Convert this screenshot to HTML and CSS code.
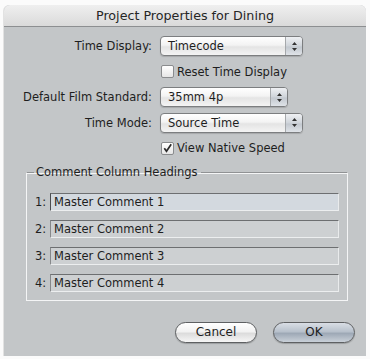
FILE: index.html
```html
<!DOCTYPE html>
<html>
<head>
<meta charset="utf-8">
<link rel="stylesheet" href="styles.css">
</head>
<body>
<div class="window">
  <div class="titlebar">Project Properties for Dining</div>
  <div class="content">
    <div class="form">
      <div class="label">Time Display:</div>
      <div class="popup w143"><span class="ptext">Timecode</span><span class="arrows"><svg width="7" height="11" viewBox="0 0 7 11"><path d="M3.5 1 L6 4 L1 4 Z M3.5 10 L6 7 L1 7 Z" fill="#333"/></svg></span></div>

      <div></div>
      <div class="check"><span class="box"></span><span>Reset Time Display</span></div>

      <div class="label">Default Film Standard:</div>
      <div class="popup w128"><span class="ptext">35mm 4p</span><span class="arrows"><svg width="7" height="11" viewBox="0 0 7 11"><path d="M3.5 1 L6 4 L1 4 Z M3.5 10 L6 7 L1 7 Z" fill="#333"/></svg></span></div>

      <div class="label">Time Mode:</div>
      <div class="popup w143"><span class="ptext">Source Time</span><span class="arrows"><svg width="7" height="11" viewBox="0 0 7 11"><path d="M3.5 1 L6 4 L1 4 Z M3.5 10 L6 7 L1 7 Z" fill="#333"/></svg></span></div>

      <div></div>
      <div class="check"><span class="box"><svg width="11" height="11" viewBox="0 0 11 11"><path d="M2.3 5.2 L4.5 8.3 L9.2 1.2" fill="none" stroke="#2a2a2a" stroke-width="1.7"/></svg></span><span>View Native Speed</span></div>
    </div>

    <fieldset class="group">
      <legend>Comment Column Headings</legend>
      <div class="rows">
        <div class="num">1:</div><div class="field active">Master Comment 1</div>
        <div class="num">2:</div><div class="field">Master Comment 2</div>
        <div class="num">3:</div><div class="field">Master Comment 3</div>
        <div class="num">4:</div><div class="field">Master Comment 4</div>
      </div>
    </fieldset>

    <div class="buttons">
      <div class="btn cancel">Cancel</div>
      <div class="btn ok">OK</div>
    </div>
  </div>
</div>
</body>
</html>
```

FILE: styles.css
```css
html, body {
  margin: 0;
  padding: 0;
  background: #fbfbfb;
}
body {
  font-family: "DejaVu Sans", "Liberation Sans", sans-serif;
  color: #1e1e1e;
  padding: 5px 0 0 4px;
}
.window {
  width: 362px;
  height: 351px;
  background: #c3c6c8;
  border-radius: 6px 6px 0 0;
  overflow: hidden;
  box-shadow: -1px 0 0 #e2e2e2;
}
.titlebar {
  height: 21px;
  line-height: 21px;
  text-align: center;
  font-size: 12.7px;
  color: #262626;
  background: linear-gradient(#efefef, #dadada);
  border-bottom: 1px solid #8d8f91;
}
.content {
  padding-top: 9px;
}
.form {
  display: grid;
  grid-template-columns: 148px auto;
  column-gap: 8px;
  grid-auto-rows: 20px;
  row-gap: 5.5px;
  align-items: center;
  font-size: 11.5px;
}
.label {
  text-align: right;
}
.popup {
  height: 20px;
  box-sizing: border-box;
  border: 1px solid #7c7e80;
  border-radius: 4px;
  background: linear-gradient(#ffffff 0%, #f3f3f3 45%, #e4e4e4 55%, #f4f4f4 100%);
  display: flex;
  align-items: center;
  box-shadow: 0 1px 1px rgba(0,0,0,0.15);
}
.w143 { width: 143px; }
.w128 { width: 128px; }
.ptext {
  flex: 1;
  padding-left: 7px;
  font-size: 11.5px;
}
.arrows {
  width: 16px;
  height: 100%;
  border-left: 1px solid #a5a8ab;
  background: linear-gradient(#eef0f3, #cfd4da 50%, #c2c8cf 55%, #dfe3e8);
  border-radius: 0 3px 3px 0;
  display: flex;
  align-items: center;
  justify-content: center;
}
.check {
  display: flex;
  align-items: center;
  gap: 3px;
  padding-left: 1px;
}
.box {
  width: 11px;
  height: 11px;
  border: 1px solid #8a8c8e;
  border-radius: 2px;
  background: linear-gradient(#ffffff, #e6e6e6);
  flex: none;
  display: flex;
}
.group {
  margin: 7px 0 0 22px;
  width: 322px;
  box-sizing: border-box;
  border: 1px solid #f4f5f6;
  border-top-color: #909294;
  box-shadow: inset 0 1px 0 #f4f5f6;
  padding: 14px 8px 8px 8px;
  min-width: 0;
}
.group legend {
  font-size: 11.5px;
  line-height: 14px;
  padding: 0 3px 0 2px;
  margin-left: -1px;
}
.rows {
  display: grid;
  grid-template-columns: 11px 1fr;
  column-gap: 4px;
  grid-auto-rows: 18px;
  row-gap: 9px;
  align-items: center;
  font-size: 11.5px;
}
.field {
  height: 18px;
  box-sizing: border-box;
  background: #cdd0d2;
  border-top: 1px solid #6d6f71;
  border-left: 1px solid #86888a;
  border-right: 1px solid #e9ebec;
  border-bottom: 1px solid #eceeef;
  padding-left: 3px;
  line-height: 16px;
  font-size: 11.5px;
}
.field.active {
  background: #d3d9df;
  border-left-color: #4b4d50;
}
.buttons {
  display: flex;
  justify-content: flex-end;
  gap: 16px;
  padding-right: 11px;
  margin-top: 21px;
}
.btn {
  width: 82px;
  height: 21px;
  box-sizing: border-box;
  border: 1px solid #5e6062;
  border-radius: 11px;
  text-align: center;
  line-height: 19px;
  font-size: 12px;
  color: #1e1e1e;
  box-shadow: 0 1px 1px rgba(0,0,0,0.2);
}
.cancel {
  background: linear-gradient(#ffffff 0%, #f2f2f2 45%, #dcdcdc 55%, #f6f6f6 100%);
}
.ok {
  background: linear-gradient(#d9dee5 0%, #b8c1cc 45%, #9ea9b6 55%, #c9d0d8 100%);
}
```
